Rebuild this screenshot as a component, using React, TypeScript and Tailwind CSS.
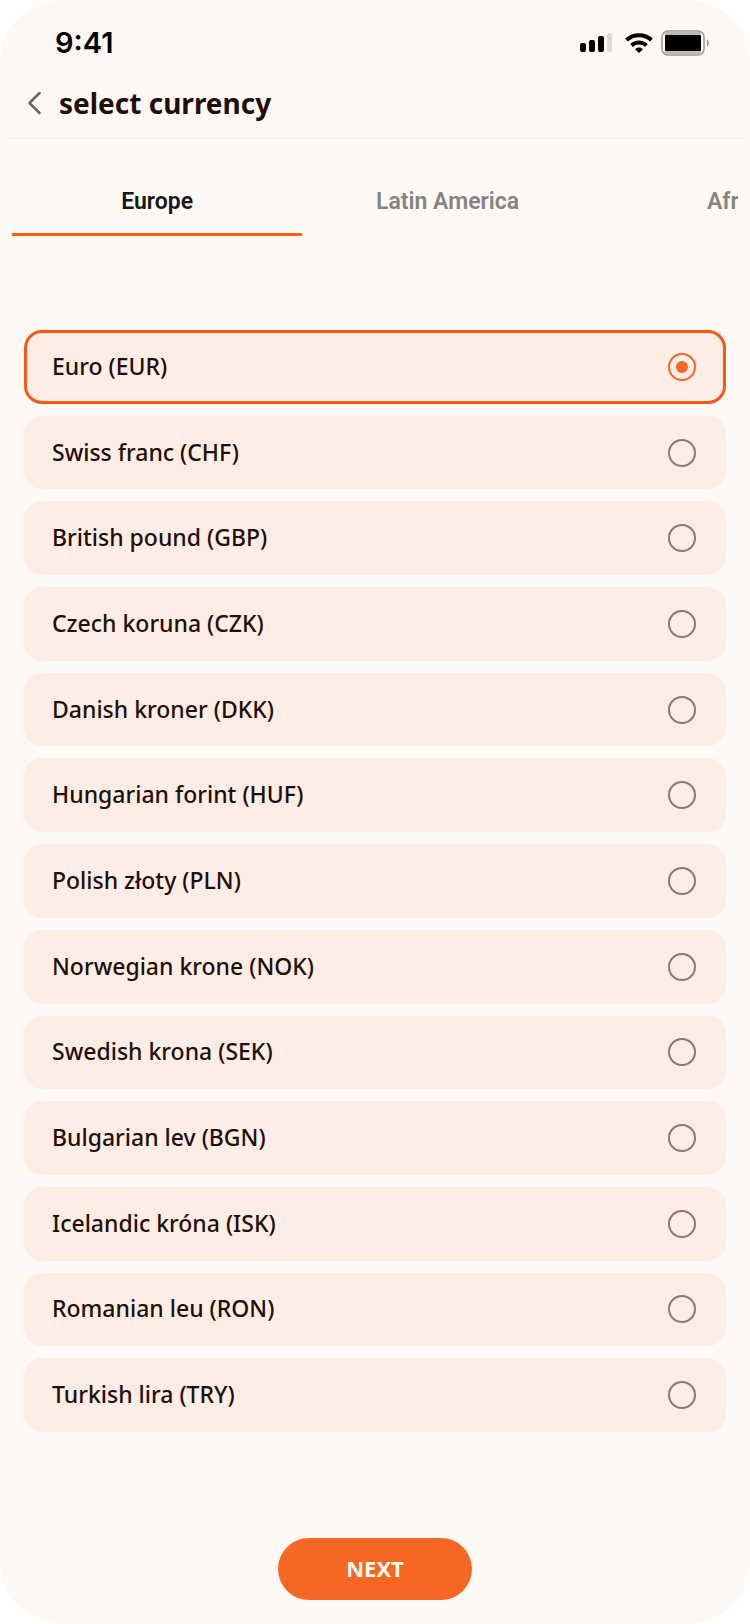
import { useState } from "react"

const regions = ["Europe", "Latin America", "Africa"]

const currencies = [
  { code: "EUR", name: "Euro" },
  { code: "CHF", name: "Swiss franc" },
  { code: "GBP", name: "British pound" },
  { code: "CZK", name: "Czech koruna" },
  { code: "DKK", name: "Danish kroner" },
  { code: "HUF", name: "Hungarian forint" },
  { code: "PLN", name: "Polish złoty" },
  { code: "NOK", name: "Norwegian krone" },
  { code: "SEK", name: "Swedish krona" },
  { code: "BGN", name: "Bulgarian lev" },
  { code: "ISK", name: "Icelandic króna" },
  { code: "RON", name: "Romanian leu" },
  { code: "TRY", name: "Turkish lira" },
]

function StatusBar() {
  return (
    <div className="flex h-[70px] items-center justify-between pt-4 pr-10 pl-[55px]">
      <span className="font-['Inter',sans-serif] text-[29px] leading-9 font-semibold text-black">9:41</span>
      <div className="flex items-center gap-2">
        <svg width="38" height="22" viewBox="0 0 38 22" aria-hidden="true">
          <rect x="1" y="11" width="6" height="9" rx="2" />
          <rect x="10" y="8" width="6" height="12" rx="2" />
          <rect x="19" y="4" width="6" height="16" rx="2" />
          <rect x="28" y="1" width="5" height="19" rx="2" fill="#dedad8" />
        </svg>
        <svg width="28" height="22" viewBox="0 0 28 22" fill="none" stroke="#000" strokeWidth="4" aria-hidden="true">
          <path d="M1.5 8C8.5 1.5 19.500 1.500 26.500 8" />
          <path d="M6.500 13.500C10.700 9.500 17.300 9.500 21.500 13.500" />
          <path d="M10 17.200C12.300 15 15.700 15 18 17.200L14 21Z" fill="#000" stroke="none" />
        </svg>
        <svg width="49" height="26" viewBox="0 0 49 26" aria-hidden="true">
          <rect x="1" y="1" width="42" height="24" rx="6" fill="#fff9f5" stroke="#9b9795" strokeWidth="1.500" />
          <path d="M6 3.500H38M6 22.500H38" stroke="#bdb9b7" strokeWidth="4" strokeLinecap="round" />
          <rect x="4" y="5" width="36" height="16" rx="1" />
          <path d="M46 9.500C48.300 11 48.300 15 46 16.500Z" fill="#8c8886" />
        </svg>
      </div>
    </div>
  )
}

export default function App() {
  const [region, setRegion] = useState("Europe")
  const [selected, setSelected] = useState("EUR")

  return (
    <main className="flex min-h-screen flex-col rounded-[62px] bg-[#fff9f5] font-['Noto_Sans',sans-serif] text-[#210e08]">
      <StatusBar />

      <header className="mx-2 flex h-[69px] items-center gap-[18px] border-b-2 border-[#feeee7] pb-0.5 pl-5">
        <button type="button" aria-label="Back">
          <svg width="13" height="24" viewBox="0 0 13 24" fill="none" stroke="#7d6158" strokeWidth="2.500" strokeLinecap="round" strokeLinejoin="round">
            <path d="M11.500 2L1.500 12L11.500 22" />
          </svg>
        </button>
        <h1 className="text-[28px] leading-9 font-bold">select currency</h1>
      </header>

      <div role="tablist" className="mx-3 mt-6 flex overflow-hidden font-['Roboto',sans-serif]">
        {regions.map((name) => (
          <button
            key={name}
            type="button"
            role="tab"
            aria-selected={region === name}
            onClick={() => setRegion(name)}
            className={`h-[73px] shrink-0 basis-2/5 border-b-3 pt-2 text-[23px] font-semibold ${
              region === name ? "border-[#fd5c14] text-[#16181b]" : "border-transparent text-[#858483]"
            }`}
          >
            {name}
          </button>
        ))}
      </div>

      <div role="radiogroup" aria-label="Currency" className="grid flex-1 auto-rows-fr gap-3 px-6 pt-[94px] pb-[106px]">
        {currencies.map((currency) => (
          <label
            key={currency.code}
            className={`flex items-center justify-between rounded-[18px] border-3 bg-[#feede5] pr-[27px] pl-[25px] ${
              selected === currency.code ? "border-[#f45a15]" : "border-[#feede5]"
            }`}
          >
            <span className="pb-0.5 text-[23px] leading-8 font-medium">
              {currency.name} ({currency.code})
            </span>
            <input
              type="radio"
              name="currency"
              value={currency.code}
              checked={selected === currency.code}
              onChange={() => setSelected(currency.code)}
              className="grid size-7 appearance-none place-items-center rounded-full border-2 border-[#8f7770] before:size-3 before:rounded-full checked:border-[#f56722] checked:before:bg-[#f56722]"
            />
          </label>
        ))}
      </div>

      <button
        type="button"
        className="mb-6 h-[62px] self-center rounded-full bg-[#f56722] px-[68px] pb-0.5 text-[22px] leading-8 font-bold text-[#fff9f5]"
      >
        NEXT
      </button>
    </main>
  )
}
